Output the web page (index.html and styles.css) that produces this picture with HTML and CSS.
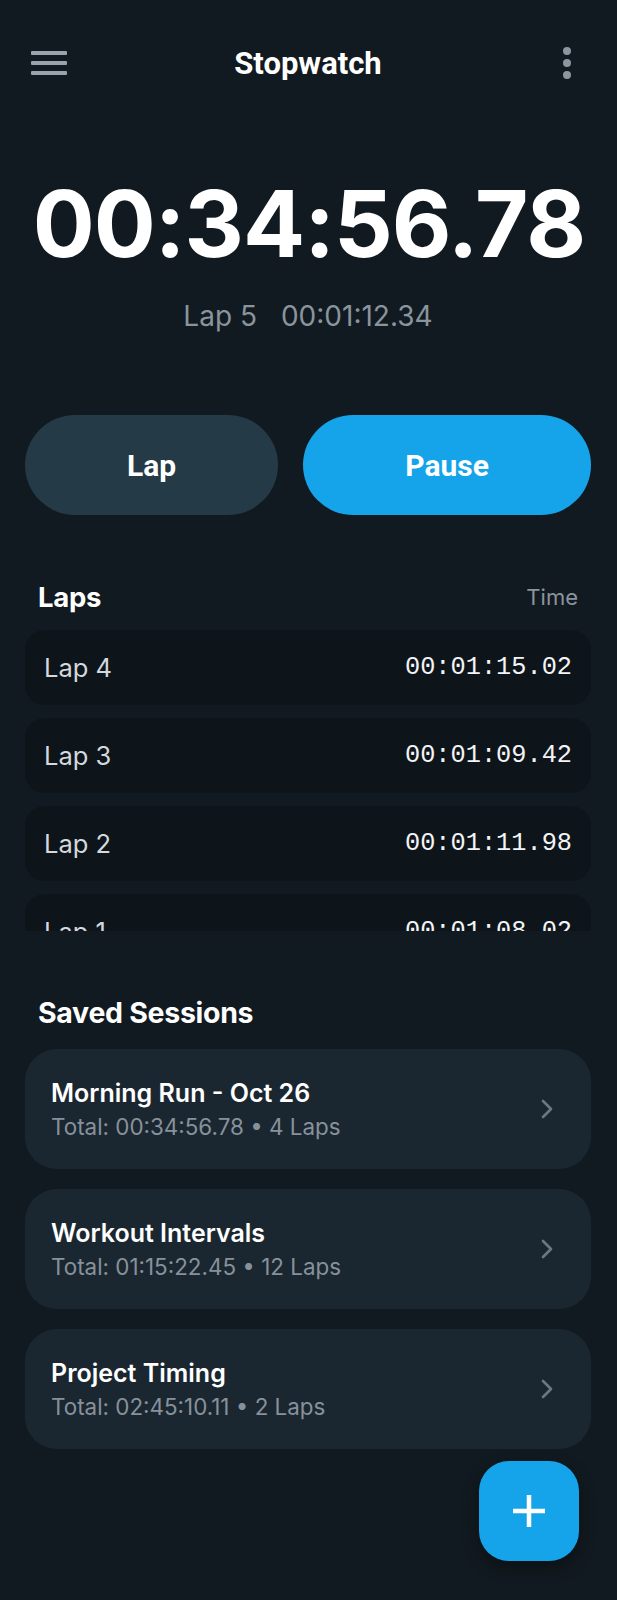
FILE: index.html
```html
<!DOCTYPE html>
<html lang="en">
<head>
<meta charset="utf-8">
<title>Stopwatch</title>
<link rel="stylesheet" href="styles.css">
</head>
<body>
<div class="app">
  <header class="topbar">
    <button class="icon-btn menu" aria-label="Menu">
      <svg width="36" height="24" viewBox="0 0 36 24"><rect x="0" y="0" width="36" height="4" rx="1" fill="#9aa3ad"/><rect x="0" y="10" width="36" height="4" rx="1" fill="#9aa3ad"/><rect x="0" y="20" width="36" height="4" rx="1" fill="#9aa3ad"/></svg>
    </button>
    <h1 class="title">Stopwatch</h1>
    <button class="icon-btn more" aria-label="More">
      <svg width="8" height="32" viewBox="0 0 8 32"><circle cx="4" cy="4" r="4" fill="#8d96a0"/><circle cx="4" cy="16" r="4" fill="#8d96a0"/><circle cx="4" cy="28" r="4" fill="#8d96a0"/></svg>
    </button>
  </header>

  <section class="timer">
    <div class="main-time">00:34:56.78</div>
    <div class="current-lap"><span>Lap 5</span><span>00:01:12.34</span></div>
  </section>

  <section class="controls">
    <button class="btn btn-lap">Lap</button>
    <button class="btn btn-pause">Pause</button>
  </section>

  <section class="laps">
    <div class="laps-head">
      <h2 class="section-title">Laps</h2>
      <span class="col-label">Time</span>
    </div>
    <ul class="lap-list">
      <li class="lap-row"><span class="lap-name">Lap 4</span><span class="lap-time">00:01:15.02</span></li>
      <li class="lap-row"><span class="lap-name">Lap 3</span><span class="lap-time">00:01:09.42</span></li>
      <li class="lap-row"><span class="lap-name">Lap 2</span><span class="lap-time">00:01:11.98</span></li>
      <li class="lap-row"><span class="lap-name">Lap 1</span><span class="lap-time">00:01:08.02</span></li>
    </ul>
  </section>

  <section class="sessions">
    <h2 class="section-title sessions-title">Saved Sessions</h2>
    <div class="session-list">
      <div class="session-card">
        <div class="session-info">
          <div class="session-name">Morning Run - Oct 26</div>
          <div class="session-meta">Total: 00:34:56.78 • 4 Laps</div>
        </div>
        <svg class="chevron" width="12" height="20" viewBox="0 0 12 20"><path d="M2 2 L10 10 L2 18" fill="none" stroke="#6c7781" stroke-width="2.6" stroke-linecap="round" stroke-linejoin="round"/></svg>
      </div>
      <div class="session-card">
        <div class="session-info">
          <div class="session-name">Workout Intervals</div>
          <div class="session-meta">Total: 01:15:22.45 • 12 Laps</div>
        </div>
        <svg class="chevron" width="12" height="20" viewBox="0 0 12 20"><path d="M2 2 L10 10 L2 18" fill="none" stroke="#6c7781" stroke-width="2.6" stroke-linecap="round" stroke-linejoin="round"/></svg>
      </div>
      <div class="session-card">
        <div class="session-info">
          <div class="session-name">Project Timing</div>
          <div class="session-meta">Total: 02:45:10.11 • 2 Laps</div>
        </div>
        <svg class="chevron" width="12" height="20" viewBox="0 0 12 20"><path d="M2 2 L10 10 L2 18" fill="none" stroke="#6c7781" stroke-width="2.6" stroke-linecap="round" stroke-linejoin="round"/></svg>
      </div>
    </div>
  </section>

  <button class="fab" aria-label="Add">
    <svg width="36" height="36" viewBox="0 0 36 36"><path d="M18 2 V34 M2 18 H34" stroke="#ffffff" stroke-width="4.5" fill="none"/></svg>
  </button>
</div>
</body>
</html>
```

FILE: styles.css
```css
* { box-sizing: border-box; }

html, body {
  margin: 0;
  padding: 0;
  background: #111a20;
}

body {
  font-family: Inter, "Noto Sans", sans-serif;
  color: #ffffff;
  min-height: 1600px;
}

.app {
  width: 617px;
  min-height: 1600px;
  padding: 0 26px 0 25px;
}

button {
  font: inherit;
  border: none;
  background: none;
  color: inherit;
  padding: 0;
  cursor: pointer;
}

.topbar {
  height: 80px;
  margin-top: 23px;
  display: grid;
  grid-template-columns: 1fr auto 1fr;
  align-items: center;
  padding: 0 6px;
}

.icon-btn {
  display: flex;
  align-items: center;
}

.menu { justify-content: flex-start; }
.more { justify-content: flex-end; padding-right: 14px; }

.title {
  margin: 0;
  font-family: Roboto, sans-serif;
  font-weight: 700;
  font-size: 31px;
  line-height: 1;
}

.timer {
  display: flex;
  flex-direction: column;
  align-items: center;
}

.main-time {
  margin-top: 75px;
  padding-left: 2px;
  font-size: 92px;
  font-weight: 700;
  line-height: 1;
  letter-spacing: -1px;
}

.current-lap {
  margin-top: 32px;
  display: flex;
  gap: 24px;
  font-size: 28px;
  line-height: 1;
  color: #8a949e;
}

.controls {
  margin-top: 85px;
  display: flex;
  gap: 25px;
}

.btn {
  flex: 1 1 auto;
  height: 100px;
  border-radius: 50px;
  font-family: Roboto, sans-serif;
  font-weight: 700;
  font-size: 30px;
}

.btn-lap { background: #243a47; }
.btn-pause { background: #15a4e9; }

.laps { margin-top: 69px; }

.laps-head {
  display: flex;
  justify-content: space-between;
  align-items: center;
  padding: 0 13px 0 13px;
}

.section-title {
  margin: 0;
  font-family: Inter, sans-serif;
  font-weight: 700;
  font-size: 27.5px;
  line-height: 24px;
  letter-spacing: -0.3px;
}

.col-label {
  font-size: 22px;
  color: #8a949e;
}

.lap-list {
  list-style: none;
  margin: 20px 0 0;
  padding: 0;
  height: 301px;
  overflow: hidden;
  display: flex;
  flex-direction: column;
  gap: 13px;
}

.lap-row {
  flex: 0 0 75px;
  display: flex;
  align-items: center;
  justify-content: space-between;
  padding: 0 19px 0 19px;
  background: #0e151a;
  border-radius: 20px;
}

.lap-name {
  font-size: 25.5px;
  font-weight: 400;
  color: #d3d9de;
}

.lap-time {
  font-family: "Liberation Mono", monospace;
  font-size: 25.3px;
  color: #f2f4f6;
}

.sessions { margin-top: 69px; }

.sessions-title {
  padding-left: 13px;
  font-size: 28.5px;
  line-height: 26px;
}

.session-list {
  margin-top: 23px;
  display: flex;
  flex-direction: column;
  gap: 20px;
}

.session-card {
  height: 120px;
  display: flex;
  align-items: center;
  justify-content: space-between;
  padding: 0 38px 0 26px;
  background: #1b2730;
  border-radius: 32px;
}

.session-info {
  display: flex;
  flex-direction: column;
  gap: 6px;
}

.session-name {
  font-size: 25px;
  font-weight: 600;
  line-height: 30px;
}

.session-meta {
  font-size: 22.4px;
  line-height: 26px;
  color: #87919b;
}

.fab {
  position: fixed;
  right: 38px;
  bottom: 39px;
  width: 100px;
  height: 100px;
  border-radius: 30px;
  background: #15a4e9;
  display: flex;
  align-items: center;
  justify-content: center;
  box-shadow: 0 6px 16px rgba(0, 0, 0, 0.35);
}
```
